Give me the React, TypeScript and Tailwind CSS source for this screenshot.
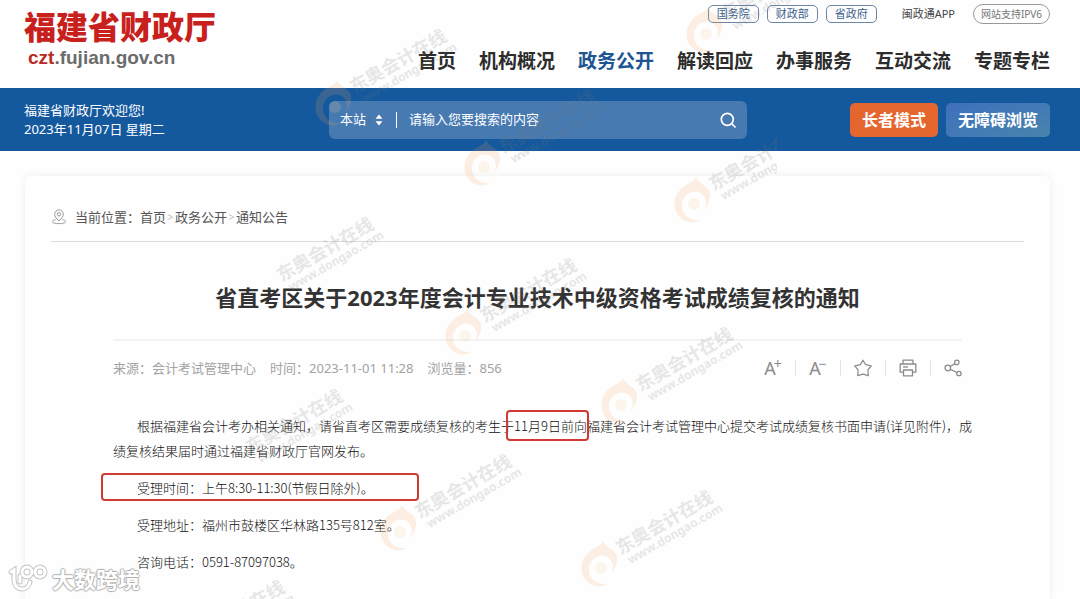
import React from "react";

const NAV = ["首页", "机构概况", "政务公开", "解读回应", "办事服务", "互动交流", "专题专栏"];
const PORTALS = ["国务院", "财政部", "省政府"];

type Mark = { x: number; y: number; swirl: boolean; width: number };

const MARKS: Mark[] = [
  { x: 334, y: 103, swirl: true, width: 150 },
  { x: 705, y: 30, swirl: true, width: 150 },
  { x: 483, y: 163, swirl: true, width: 150 },
  { x: 693, y: 200, swirl: true, width: 84 },
  { x: 261, y: 291, swirl: false, width: 150 },
  { x: 464, y: 332, swirl: true, width: 150 },
  { x: 620, y: 401, swirl: true, width: 150 },
  { x: 230, y: 463, swirl: false, width: 150 },
  { x: 399, y: 528, swirl: true, width: 150 },
  { x: 600, y: 564, swirl: true, width: 150 },
  { x: 172, y: 654, swirl: false, width: 150 },
];

function Swirl() {
  return (
    <svg viewBox="0 0 48 56" className="absolute left-0 top-0 h-14 w-12" fill="none">
      <path
        d="M40 18 C36 12 30 12 27 5 C25 11 17 11 11 18 C1 29 5 46 19 50 C24 51 28 50 31 48 C20 49 12 42 13 32 C14 22 25 16 33 22 C38 26 38 34 34 38 C39 34 43 26 40 18 Z"
        fill="#f3a45c"
      />
      <circle cx="25" cy="32" r="6" fill="#f7cf9a" />
    </svg>
  );
}

function Watermark({ mark }: { mark: Mark }) {
  return (
    <div
      className="absolute h-36 overflow-hidden"
      style={{ left: mark.x - 24, top: mark.y - 88, width: mark.width + 24 }}
    >
      {mark.swirl && (
        <div className="absolute left-0 top-[60px] h-14 w-12 opacity-[0.17]">
          <Swirl />
        </div>
      )}
      <div className="absolute left-[52px] top-[60px] origin-bottom-left -rotate-[30deg] whitespace-nowrap text-[#777] opacity-[0.17]">
        <div className="text-[18px] font-bold leading-5">东奥会计在线</div>
        <div className="pl-1 text-[12px] font-bold leading-3">www.dongao.com</div>
      </div>
    </div>
  );
}

function PinIcon() {
  return (
    <svg viewBox="0 0 16 16" className="h-4 w-4 text-[#999]" fill="none" stroke="currentColor" strokeWidth="1">
      <path d="M8 12 C5 9 3.7 7.400 3.700 5.200 A4.300 4.300 0 0 1 12.300 5.200 C12.300 7.400 11 9 8 12 Z" />
      <circle cx="8" cy="5.300" r="1.700" />
      <path d="M4.500 10.500 C2.500 11 1.500 11.700 1.500 12.600 C1.500 14 4 14.600 8 14.600 C12 14.600 14.500 14 14.500 12.600 C14.500 11.700 13.500 11 11.500 10.500" />
    </svg>
  );
}

function StarIcon() {
  return (
    <svg viewBox="0 0 18 18" className="h-[18px] w-[18px]" fill="none" stroke="currentColor" strokeWidth="1.2" strokeLinejoin="round">
      <path d="M9 1.200 L11.600 5.600 L17.200 6.900 L13.900 11 L14.300 16.600 L9 15.200 L3.700 16.600 L4.100 11 L0.800 6.900 L6.400 5.600 Z" />
    </svg>
  );
}

function PrintIcon() {
  return (
    <svg viewBox="0 0 18 18" className="h-[18px] w-[18px]" fill="none" stroke="currentColor" strokeWidth="1.3" strokeLinejoin="round">
      <path d="M4 5 V1.200 H14 V5" />
      <path d="M4 13.200 H1.200 V5 H16.800 V13.200 H14" />
      <path d="M4.500 11 H13.500 V16.800 H4.500 Z" />
      <path d="M4 8 H9" />
    </svg>
  );
}

function ShareIcon() {
  return (
    <svg viewBox="0 0 18 18" className="h-[18px] w-[18px]" fill="none" stroke="currentColor" strokeWidth="1.3">
      <circle cx="3.800" cy="9" r="2.800" />
      <circle cx="12.800" cy="3.400" r="2.200" />
      <circle cx="14.900" cy="14.500" r="2.200" />
      <path d="M6.200 7.500 L11 4.600 M6.400 10.300 L12.900 13.500" />
    </svg>
  );
}

function Separator() {
  return <span className="h-4 w-px bg-[#e4e4e4]" />;
}

function Header() {
  return (
    <header className="flex h-[88px] justify-between pl-6 pr-[30px]">
      <a href="#home" className="block whitespace-nowrap pt-2">
        <span className="block text-[32px] font-black leading-[38px] text-[#c8201c]">福建省财政厅</span>
        <span className="block pl-1 font-['Liberation_Sans',sans-serif] text-[19px] font-bold leading-6 text-[#6b6b6b]">
          <span className="text-[#b92a25]">czt</span>.fujian.gov.cn
        </span>
      </a>
      <div className="flex flex-col items-end whitespace-nowrap">
        <div className="flex items-center pt-1">
          <div className="flex gap-2">
            {PORTALS.map((p) => (
              <a
                key={p}
                href="#portal"
                className="flex h-[18px] w-[51px] items-center justify-center rounded-[5px] border border-[#6d86a5] text-[11px] text-[#3d5f8c]"
              >
                {p}
              </a>
            ))}
          </div>
          <a href="#app" className="ml-[25px] text-[11px] leading-5 text-[#444]">
            闽政通APP
          </a>
          <a
            href="#ipv6"
            className="ml-[18px] flex h-5 w-[77px] items-center justify-center rounded-full border border-[#999] text-[10px] text-[#777]"
          >
            网站支持IPV6
          </a>
        </div>
        <nav className="mt-[23px] flex gap-[23px] text-[19px] font-bold leading-7">
          {NAV.map((n) => (
            <a key={n} href="#nav" className={n === "政务公开" ? "text-[#1d5593]" : "text-[#2c2c2c]"}>
              {n}
            </a>
          ))}
        </nav>
      </div>
    </header>
  );
}

function SearchBand() {
  return (
    <div className="flex h-[63px] items-center bg-[#14599e] pl-6 pr-[30px] text-white">
      <div className="w-[305px] shrink-0 text-[13px] leading-[19px]">
        <p>福建省财政厅欢迎您!</p>
        <p>2023年11月07日 星期二</p>
      </div>
      <form className="flex h-[38px] min-w-0 flex-1 items-center rounded-md bg-[#477ab1] px-[11px]" onSubmit={(e) => e.preventDefault()}>
        <label htmlFor="scope" className="sr-only">搜索范围</label>
        <div className="relative flex w-[46px] items-center">
          <select id="scope" className="w-full appearance-none bg-transparent text-[13px] outline-none">
            <option>本站</option>
          </select>
          <svg viewBox="0 0 8 12" className="pointer-events-none absolute right-[3px] h-3 w-2" fill="#fff">
            <path d="M4 0.500 L7.500 4.800 H0.500 Z M4 11.500 L7.500 7.200 H0.500 Z" />
          </svg>
        </div>
        <span className="ml-[10px] h-4 w-px bg-white" />
        <label htmlFor="query" className="sr-only">搜索内容</label>
        <input
          id="query"
          type="text"
          placeholder="请输入您要搜索的内容"
          className="ml-3 min-w-0 flex-1 bg-transparent text-[13px] text-white outline-none placeholder:text-white"
        />
        <button type="submit" aria-label="搜索">
          <svg viewBox="0 0 16 16" className="h-4 w-4" fill="none" stroke="#fff" strokeWidth="1.7" strokeLinecap="round">
            <circle cx="7.300" cy="7.300" r="6" />
            <path d="M11.700 11.700 L15 15" />
          </svg>
        </button>
      </form>
      <div className="ml-[103px] flex shrink-0 gap-2 text-[16px] font-bold">
        <button className="h-[34px] rounded-[5px] bg-[#e5652f] px-3">长者模式</button>
        <button className="h-[34px] rounded-[5px] bg-linear-to-br from-[#3f6fbd] to-[#4784ad] px-3">无障碍浏览</button>
      </div>
    </div>
  );
}

function Toolbar() {
  const btn = "flex h-[18px] w-[18px] items-center justify-center";
  return (
    <div className="flex items-center gap-[13px] text-[#8c8c8c]">
      <button className={btn} aria-label="放大字体">
        <span className="text-[18px] leading-[18px]">A</span>
        <span className="-ml-0.5 self-start text-[14px] leading-[10px]">+</span>
      </button>
      <Separator />
      <button className={btn} aria-label="缩小字体">
        <span className="text-[18px] leading-[18px]">A</span>
        <span className="-ml-0.5 self-start text-[14px] leading-[10px]">−</span>
      </button>
      <Separator />
      <button className={btn} aria-label="收藏">
        <StarIcon />
      </button>
      <Separator />
      <button className={btn} aria-label="打印">
        <PrintIcon />
      </button>
      <Separator />
      <button className={btn} aria-label="分享">
        <ShareIcon />
      </button>
    </div>
  );
}

function Article() {
  return (
    <article className="px-[62px]">
      <h1 className="border-b-2 border-[#f3f3f3] pb-[26px] pt-[39px] text-center text-[22px] font-bold leading-8 text-[#333]">
        省直考区关于2023年度会计专业技术中级资格考试成绩复核的通知
      </h1>
      <div className="flex h-[53px] items-center justify-between">
        <div className="flex gap-[14px] whitespace-nowrap text-[13px] leading-5 text-[#a3a3a3]">
          <span>来源：会计考试管理中心</span>
          <span>时间：2023-11-01 11:28</span>
          <span>浏览量：856</span>
        </div>
        <Toolbar />
      </div>
      <div className="-mr-4 mt-[19px] flex flex-col gap-3 font-['Noto_Sans_CJK_SC',sans-serif] text-[13px] font-light leading-[25px] text-[#111]">
        <p className="indent-6">
          根据福建省会计考办相关通知，请省直考区需要成绩复核的考生于
          <span className="relative indent-0">
            11月9日前向
            <span className="absolute -inset-y-1.5 -left-2 -right-0.5 rounded-sm border-2 border-[#cf3b33]" />
          </span>
          福建省会计考试管理中心提交考试成绩复核书面申请(详见附件)，成绩复核结果届时通过福建省财政厅官网发布。
        </p>
        <p className="relative indent-6">
          受理时间：上午8:30-11:30(节假日除外)。
          <span className="absolute -left-3 -top-0.5 h-7 w-[318px] rounded-sm border-2 border-[#cf3b33]" />
        </p>
        <p className="indent-6">受理地址：福州市鼓楼区华林路135号812室。</p>
        <p className="indent-6">咨询电话：0591-87097038。</p>
      </div>
    </article>
  );
}

function SourceBadge() {
  return (
    <div className="absolute left-2 top-[563px] flex items-center gap-1 text-white">
      <svg viewBox="0 0 40 30" className="h-[30px] w-10" fill="none" strokeLinecap="round">
        <g stroke="#c4c4c4" strokeWidth="5">
          <path d="M3 8 L6 6 V15 C6 22 10 25 14 25 C18 25 21 22 22 18" />
          <circle cx="19" cy="8" r="5" />
          <circle cx="32" cy="8" r="5" />
          <path d="M12 12 V18" />
        </g>
        <g stroke="#fff" strokeWidth="3">
          <path d="M3 8 L6 6 V15 C6 22 10 25 14 25 C18 25 21 22 22 18" />
          <circle cx="19" cy="8" r="5" />
          <circle cx="32" cy="8" r="5" />
          <path d="M12 12 V18" />
        </g>
      </svg>
      <span className="text-[22px] font-bold leading-8 [text-shadow:1px_0_1px_#b0b0b0,-1px_0_1px_#b0b0b0,0_1px_1px_#b0b0b0,0_-1px_1px_#b0b0b0]">
        大数跨境
      </span>
    </div>
  );
}

export default function App() {
  return (
    <div className="relative flex min-h-screen flex-col overflow-hidden bg-[#fefefe] font-['Noto_Sans','Noto_Sans_CJK_SC',sans-serif]">
      <Header />
      <SearchBand />
      <main className="flex flex-1 flex-col pl-[25px] pr-[30px] pt-[25px]">
        <section className="flex-1 rounded-t-md bg-[#fefefe] px-[26px] shadow-[0_0_8px_rgba(0,0,0,0.07)]">
          <nav className="flex h-[66px] items-center border-b border-[#dcdcdc] pt-4 text-[13px] leading-5 text-[#555]">
            <PinIcon />
            <span className="ml-2">当前位置：</span>
            <a href="#home">首页</a>
            <span className="w-[9px] text-center text-[10px] text-[#bbb]">&gt;</span>
            <a href="#open">政务公开</a>
            <span className="w-[9px] text-center text-[10px] text-[#bbb]">&gt;</span>
            <a href="#notice">通知公告</a>
          </nav>
          <Article />
        </section>
      </main>
      <div className="pointer-events-none absolute inset-0 overflow-hidden">
        {MARKS.map((m) => (
          <Watermark key={`${m.x}-${m.y}`} mark={m} />
        ))}
        <SourceBadge />
      </div>
    </div>
  );
}
